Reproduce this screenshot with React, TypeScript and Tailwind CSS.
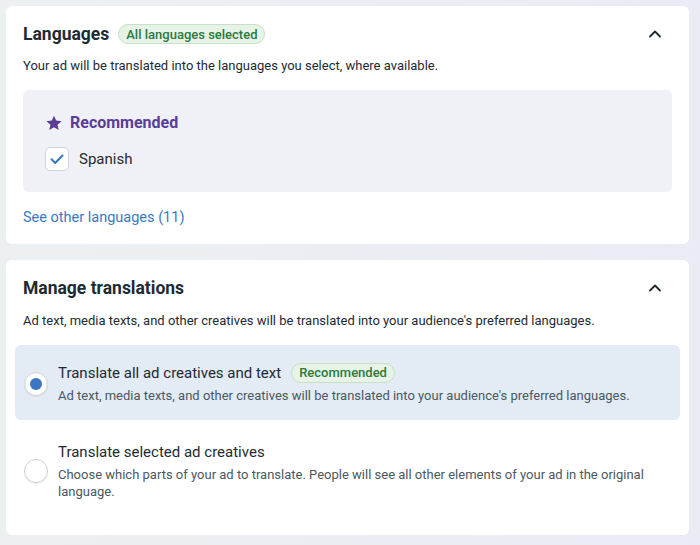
import React, { useState } from 'react';

const font = { fontFamily: 'Roboto, "Noto Sans", sans-serif' };

const ChevronUp = () => (
  <svg width="16" height="16" viewBox="0 0 16 16" fill="none">
    <path d="M3 10.5 8 5.5l5 5" stroke="#1c2b33" strokeWidth="1.8" strokeLinecap="round" strokeLinejoin="round" />
  </svg>
);

const Badge = ({ children }: { children: React.ReactNode }) => (
  <span className="inline-flex items-center h-[20px] px-[7px] rounded-full border border-[#c6e1c5] bg-[#e7f3e6] text-[13px] font-medium text-[#2b7a3f] leading-none">
    {children}
  </span>
);

const Radio = ({ checked }: { checked: boolean }) => (
  <span className="flex items-center justify-center w-[24px] h-[24px] shrink-0 rounded-full bg-white border border-[#cdd2d8] shadow-[0_1px_1px_rgba(0,0,0,0.06)]">
    {checked && <span className="w-[12px] h-[12px] rounded-full bg-[#3a76c1]" />}
  </span>
);

export default function App() {
  const [mode, setMode] = useState<'all' | 'selected'>('all');

  return (
    <div style={font} className="w-[700px] h-[545px] overflow-hidden bg-gradient-to-r from-[#edf0f1] to-[#ebebf6] px-[6px] pt-[6px] text-[#1c2b33]">
      {/* Languages */}
      <section className="bg-white rounded-[6px] px-[17px] pt-[18px] pb-[15px] mr-[5px]">
        <div className="flex items-center justify-between h-[20px]">
          <div className="flex items-center gap-[9px]">
            <h2 className="text-[17.5px] font-bold">Languages</h2>
            <Badge>All languages selected</Badge>
          </div>
          <button className="mr-[9px]"><ChevronUp /></button>
        </div>
        <p className="mt-[13px] text-[13px] leading-[18px]">
          Your ad will be translated into the languages you select, where available.
        </p>
        <div className="mt-[15px] rounded-[6px] bg-[#f0f1f6] px-[22px] pt-[21px] pb-[21px]">
          <div className="flex items-center gap-[7px] text-[#5a3d98]">
            <svg width="18" height="18" viewBox="0 0 24 24" fill="currentColor">
              <path d="M12 2.2l2.95 6.6 7.2.7-5.43 4.8 1.6 7.06L12 17.7l-6.32 3.66 1.6-7.06L1.85 9.5l7.2-.7z" />
            </svg>
            <span className="text-[16px] font-bold">Recommended</span>
          </div>
          <label className="mt-[12px] flex items-center gap-[10px]">
            <span className="flex items-center justify-center w-[24px] h-[24px] rounded-[5px] bg-white border border-[#cdd3da]">
              <svg width="16" height="16" viewBox="0 0 16 16" fill="none">
                <path d="M2.5 8.3 6.2 12 13.5 4.5" stroke="#3a78c4" strokeWidth="2" strokeLinecap="round" strokeLinejoin="round" />
              </svg>
            </span>
            <span className="text-[15px]">Spanish</span>
          </label>
        </div>
        <a className="block mt-[15px] text-[14.5px] text-[#3a79c2]">See other languages (11)</a>
      </section>

      {/* Manage translations */}
      <section className="mt-[16px] bg-white rounded-[6px] px-[9px] pt-[18px] pb-[15px] mr-[5px]">
        <div className="flex items-center justify-between h-[20px] px-[8px]">
          <h2 className="text-[17.5px] font-bold">Manage translations</h2>
          <button className="mr-[9px]"><ChevronUp /></button>
        </div>
        <p className="mt-[14px] px-[8px] text-[13px] leading-[18px]">
          Ad text, media texts, and other creatives will be translated into your audience's preferred languages.
        </p>
        <div className="mt-[15px] flex flex-col gap-[9px]">
          <button
            onClick={() => setMode('all')}
            className={`flex items-center gap-[10px] rounded-[6px] pl-[9px] pr-[12px] pt-[18px] pb-[15px] text-left ${mode === 'all' ? 'bg-[#e3ebf5]' : 'bg-white'}`}
          >
            <Radio checked={mode === 'all'} />
            <div className="flex flex-col">
              <div className="flex items-center gap-[10px]">
                <span className="text-[15px] leading-[20px]">Translate all ad creatives and text</span>
                <Badge>Recommended</Badge>
              </div>
              <span className="mt-[4px] text-[13px] leading-[18px] text-[#4b5862]">
                Ad text, media texts, and other creatives will be translated into your audience's preferred languages.
              </span>
            </div>
          </button>
          <button
            onClick={() => setMode('selected')}
            className={`flex items-center gap-[10px] rounded-[6px] pl-[9px] pr-[12px] pt-[13px] pb-[20px] text-left ${mode === 'selected' ? 'bg-[#e3ebf5]' : 'bg-white'}`}
          >
            <Radio checked={mode === 'selected'} />
            <div className="flex flex-col">
              <span className="text-[15px] leading-[20px]">Translate selected ad creatives</span>
              <span className="mt-[4px] text-[13px] leading-[17px] text-[#4b5862]">
                Choose which parts of your ad to translate. People will see all other elements of your ad in the original language.
              </span>
            </div>
          </button>
        </div>
      </section>
    </div>
  );
}
